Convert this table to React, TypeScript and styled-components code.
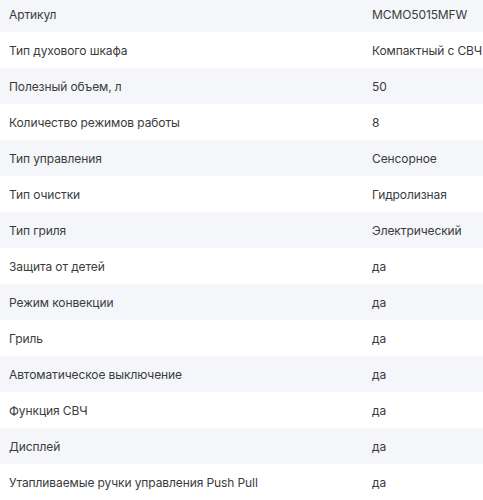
import styled, { createGlobalStyle } from 'styled-components';

const specs: [string, string][] = [
  ['Артикул', 'MCMO5015MFW'],
  ['Тип духового шкафа', 'Компактный с СВЧ'],
  ['Полезный объем, л', '50'],
  ['Количество режимов работы', '8'],
  ['Тип управления', 'Сенсорное'],
  ['Тип очистки', 'Гидролизная'],
  ['Тип гриля', 'Электрический'],
  ['Защита от детей', 'да'],
  ['Режим конвекции', 'да'],
  ['Гриль', 'да'],
  ['Автоматическое выключение', 'да'],
  ['Функция СВЧ', 'да'],
  ['Дисплей', 'да'],
  ['Утапливаемые ручки управления Push Pull', 'да'],
];

const GlobalStyle = createGlobalStyle`
  html, body {
    margin: 0;
    padding: 0;
    background: #fff;
  }
  body {
    font-family: Inter, "Noto Sans", sans-serif;
    overflow: hidden;
  }
`;

const Table = styled.div`
  display: flex;
  flex-direction: column;
  margin-top: -4px;
`;

const Row = styled.div<{ $striped: boolean }>`
  display: grid;
  grid-template-columns: 1fr 111px;
  align-items: center;
  height: 36px;
  padding-left: 9px;
  background: ${p => (p.$striped ? '#f4f6fa' : '#ffffff')};
`;

const Cell = styled.span`
  font-size: 12px;
  letter-spacing: -0.1px;
  color: #3b3b3b;
  white-space: nowrap;
`;

export default function App() {
  return (
    <>
      <GlobalStyle />
      <Table>
        {specs.map(([name, value], i) => (
          <Row key={name} $striped={i % 2 === 0}>
            <Cell>{name}</Cell>
            <Cell>{value}</Cell>
          </Row>
        ))}
      </Table>
    </>
  );
}
